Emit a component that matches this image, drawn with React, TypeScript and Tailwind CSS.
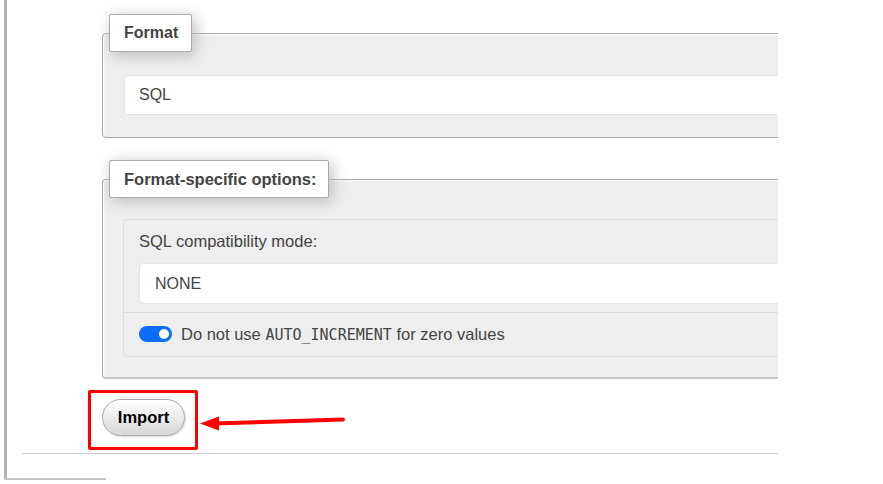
import React from "react";

export default function App() {
  return (
    <div
      className="relative w-[883px] h-[484px] bg-white overflow-hidden text-[16px] text-[#444]"
      style={{ fontFamily: '"Liberation Sans", Arial, sans-serif' }}
    >
      <div className="ml-[4px] h-[478px] w-[774px] border-l-[3px] border-[#b3b3b3] overflow-hidden">
        {/* Format fieldset */}
        <div className="pt-[14px] pl-[95px]">
          <div className="relative z-10 ml-[7px] h-[38px] w-[83px] flex items-center pl-[14px] bg-white border border-[#aaa] rounded-[2px] shadow-[3px_3px_15px_#bbb] font-bold text-[#444]">
            Format
          </div>
          <div className="-mt-[19px] w-[760px] h-[105px] border border-[#aaa] rounded-[4px] bg-[#eee] shadow-[inset_1px_1px_2px_#fff] pt-[41px] pl-[21px]">
            <div className="h-[40px] bg-white rounded-[4px] border border-[#e4e4e4] flex items-center pl-[14px] text-[#444]">
              SQL
            </div>
          </div>
        </div>

        {/* Format-specific options fieldset */}
        <div className="pt-[22px] pl-[95px]">
          <div className="relative z-10 ml-[7px] h-[38px] w-[220px] flex items-center pl-[14px] bg-white border border-[#aaa] rounded-[2px] shadow-[3px_3px_15px_#bbb] font-bold text-[16.5px] text-[#444]">
            Format-specific options:
          </div>
          <div className="-mt-[19px] w-[760px] h-[200px] border border-[#aaa] border-b-2 border-b-[#c4c4c4] rounded-[4px] bg-[#eee] shadow-[inset_1px_1px_2px_#fff] pt-[39px] pl-[20px]">
            <div className="h-[138px] border border-[#dcdcdc] rounded-[4px] bg-[#eee] flex flex-col">
              <div className="pt-[9px] pl-[15px] pb-[8px] border-b border-[#dadada]">
                <div className="h-[24px] leading-[24px] mb-[10px] text-[16.5px]">SQL compatibility mode:</div>
                <div className="h-[41px] bg-white rounded-[4px] border border-[#e4e4e4] flex items-center pl-[15px]">
                  NONE
                </div>
              </div>
              <div className="flex-1 flex items-center pl-[15px] pb-[1px]">
                <div className="w-[33px] h-[16px] rounded-full bg-[#0d6efd] flex items-center justify-end pr-[3px]">
                  <div className="w-[10px] h-[10px] rounded-full bg-white" />
                </div>
                <span className="ml-[9px] text-[16.5px]">
                  Do not use{" "}
                  <span
                    className="text-[15px]"
                    style={{ fontFamily: '"DejaVu Sans Mono", "Liberation Mono", monospace' }}
                  >
                    AUTO_INCREMENT
                  </span>{" "}
                  for zero values
                </span>
              </div>
            </div>
          </div>
        </div>

        {/* Import button with annotation box */}
        <div className="mt-[11px] ml-[81px] w-[110px] h-[60px] border-[3px] border-[#ff0000] rounded-[2px] pt-[6px] pl-[11px]">
          <button className="w-[83px] h-[37px] rounded-full border border-[#aaa] bg-gradient-to-b from-white to-[#d8d8d8] shadow-[1px_1px_2px_rgba(0,0,0,0.15)] font-bold text-black text-[16.5px]">
            Import
          </button>
        </div>

        <div className="mt-[3px] ml-[15px] h-[1px] bg-[#cfcfcf]" />
      </div>
      <div className="ml-[4px] w-[102px] h-[2px] bg-[#c4c4c4]" />

      {/* Red arrow annotation */}
      <svg
        className="absolute left-[195px] top-[410px]"
        width="155"
        height="25"
        viewBox="195 410 155 25"
      >
        <line x1="214" y1="423.5" x2="343" y2="419.5" stroke="#ff0000" strokeWidth="4" strokeLinecap="round" />
        <polygon points="200,423.5 219,416.5 219,430.5" fill="#ff0000" />
      </svg>
    </div>
  );
}
